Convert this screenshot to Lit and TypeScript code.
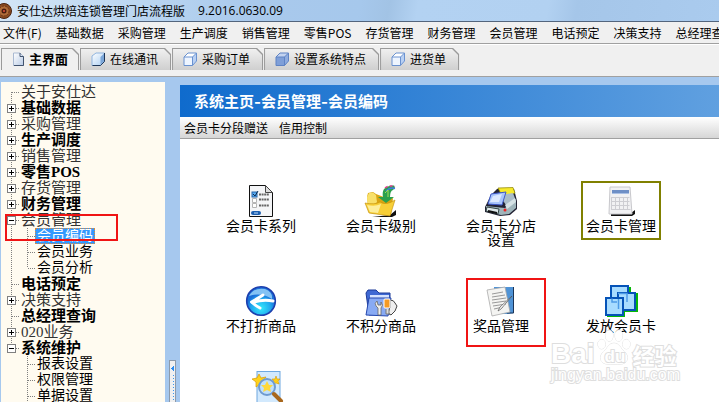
import { LitElement, html, css, svg, nothing } from "lit";
import { customElement, property } from "lit/decorators.js";

const MENUS = ["文件(F)", "基础数据", "采购管理", "生产调度", "销售管理", "零售POS", "存货管理", "财务管理", "会员管理", "电话预定", "决策支持", "总经理查询"];

const TABS = [
  { label: "主界面", icon: "page", active: true },
  { label: "在线通讯", icon: "glass", active: false },
  { label: "采购订单", icon: "cube", active: false },
  { label: "设置系统特点", icon: "solid", active: false },
  { label: "进货单", icon: "cube", active: false },
];

interface Node {
  label: string;
  box?: "plus" | "minus";
  strong?: boolean;
  children?: string[];
}

const TREE: Node[] = [
  { label: "关于安仕达" },
  { label: "基础数据", box: "plus", strong: true },
  { label: "采购管理", box: "plus" },
  { label: "生产调度", box: "plus", strong: true },
  { label: "销售管理", box: "plus" },
  { label: "零售POS", box: "plus", strong: true },
  { label: "存货管理", box: "plus" },
  { label: "财务管理", box: "plus", strong: true },
  { label: "会员管理", box: "minus", children: ["会员编码", "会员业务", "会员分析"] },
  { label: "电话预定", strong: true },
  { label: "决策支持", box: "plus" },
  { label: "总经理查询", strong: true },
  { label: "020业务", box: "plus" },
  { label: "系统维护", box: "minus", strong: true, children: ["报表设置", "权限管理", "单据设置"] },
];

const SELECTED = "会员编码";

const cube = (front: string, top: string, side: string, line: string) => svg`
  <path d="M1 5L5 1H13.5V9L9.5 13.5H1Z" fill=${top}/>
  <path d="M9.5 5L13.5 1V9L9.5 13.5Z" fill=${side}/>
  <path d="M1 5H9.5V13.5H1Z" fill=${front}/>
  <path d="M1 5L5 1H13.5V9L9.5 13.5H1ZM1 5H9.5V13.5M9.5 5L13.5 1" fill="none" stroke=${line} stroke-width="1"/>`;

const TAB_ICONS: Record<string, unknown> = {
  page: svg`<defs><linearGradient id="pg" x2="1" y2="1"><stop stop-color="#fff"/><stop offset="1" stop-color="#b9cbe6"/></linearGradient></defs>
    <path d="M1.5 1H8L11.5 4.5V13.5H1.5Z" fill="url(#pg)" stroke="#a9b9d2"/><path d="M8 1V4.5H11.5V13.5H2" fill="none" stroke="#41536f"/>`,
  glass: svg`<defs><linearGradient id="gl" x2="1" y2="1"><stop stop-color="#fff"/><stop offset="1" stop-color="#a9cdf2"/></linearGradient></defs>
    <path d="M1 4L5 1H13.5V9.500L9.500 13.5H1Z" fill="url(#gl)" stroke="#8fb4df"/><path d="M13.500 1V9.500L9.500 13.500H1.500" fill="none" stroke="#1d3557"/><path d="M9.500 5L13 1.500V9.300L9.500 13Z" fill="#7ba6d8"/>`,
  cube: cube("#eef5ff", "#fff", "#b9d0f3", "#6a92d0"),
  solid: cube("#7f9fd8", "#c3d3f0", "#8facdf", "#5f83c4"),
};

const ICONS: Record<string, unknown> = {
  options: svg`<path d="M12.500 .5H28.500L35.500 7.500V31.500H12.500Z" fill="#f4f5f7" stroke="#111"/>
    <path d="M28.500 .5V7.500H35.500Z" fill="#ddd" stroke="#444"/>
    <rect x="15" y="7" width="5" height="5" fill="#5aaaf0" stroke="#2465a8"/><path d="M16 9L18 11L21 6" fill="none" stroke="#0a2a50"/>
    <path d="M15.500 13.500h4v4h-4zM15.500 18.500h4v4h-4z" fill="#fff" stroke="#b5b5b5"/>
    <path d="M22 9.500h10M22 14.500h10M22 20.500h10" stroke="#666" stroke-width="2" stroke-dasharray="2 .6"/>
    <rect x="14" y="26" width="10" height="4" rx="2" fill="#1d5fae"/><path d="M17 28h4" stroke="#bcd9f7"/>`,
  folder: svg`<path d="M33 30L39 25V30L35 32H15Z" fill="#111"/>
    <path d="M10 12L11 8L16 7L19 9L32 14L36 13L34 30L12 28Z" fill="#d9a512"/>
    <path d="M10 12L12 8L16 7.500L19 10L20 17L11 27Z" fill="#f8e06a"/>
    <path d="M27 4Q31 0 37 .5L38 3L36 5Q33 6 33 12H37L29 18L21 12H26Q25 7 27 4Z" fill="#2ba04b"/>
    <path d="M28 3Q32 0 38 1.500" stroke="#e33c8d" stroke-width="1.500" stroke-dasharray="3 2" fill="none"/><path d="M29 6Q33 2 38 3.500" stroke="#3d7be0" stroke-width="1.500" fill="none"/><path d="M28 8Q30 6 31 5V12" stroke="#a4dc5a" fill="none"/>
    <path d="M8 18Q18 20 23 17Q29 21 38 15L33 31L12 28Z" fill="#f7cf37" stroke="#c08c08" stroke-width=".6"/>
    <path d="M10 20Q18 22 24 19L21 28L13 27Z" fill="#fdee9b"/>`,
  printer: svg`<path d="M8 22L14 10L20 4L24 3L37 4L40 16V24L33 30L23 31L8 27Z" fill="#223"/>
    <path d="M21 3L36 2.500L38 8L26 13Z" fill="#f7ea2c" stroke="#8a8100" stroke-width=".7"/>
    <path d="M22 10L36 8L39 16L29 20Z" fill="#a9bcc8"/>
    <path d="M14 9L29 7L25 20L11 19Z" fill="#a9c5fb" stroke="#3c58c8"/><path d="M16 11L25 9L22 17L13 17Z" fill="#dce9ff"/>
    <path d="M9 21L28 23L39 14V23L32 29L24 30L9 26Z" fill="#9fb5bb"/><path d="M28 20L38 13L39 17L30 24Z" fill="#d5e2e5"/>
    <path d="M10 22L22 24L21 29L9 26Z" fill="#dfe9eb" stroke="#344"/><path d="M11 26L20 28" stroke="#111" stroke-width="2"/>
    <circle cx="28" cy="25" r="1.500" fill="#e22"/>`,
  calc: svg`<path d="M34 28L38 25V29L35 31H14V29Z" fill="#111"/>
    <path d="M13 2H33L35 29H12Z" fill="#f1f1f3" stroke="#c8c8cc"/>
    <rect x="15" y="5" width="17" height="3" fill="#6e8fc6"/><path d="M15 8.500h17" stroke="#aac0e4"/>
    <path d="M14.500 12.500h18M14.500 16.500h18M14.500 20.500h18M14.500 24.500h19M14.500 12v13M18.500 12v13M22.500 12v13M26.500 12v13M30.500 12v13" stroke="#cdcdd2"/>`,
  back: svg`<defs><radialGradient id="bk" cy=".75"><stop stop-color="#35e8fb"/><stop offset=".7" stop-color="#20a6ee"/><stop offset="1" stop-color="#1a6fd8"/></radialGradient></defs>
    <circle cx="24" cy="16" r="14.300" fill="url(#bk)" stroke="#1d3fae" stroke-width="1.600"/>
    <path d="M12 11Q17 2 28 4Q36 7 35 14Q24 7 12 11Z" fill="#9dd7fb" opacity=".8"/>
    <path d="M26 10Q20 14 14.500 17Q19 21 23 23M15 17.500Q26 14 36 16" fill="none" stroke="#fff" stroke-width="3" stroke-linejoin="round" stroke-linecap="round"/>`,
  tools: svg`<path d="M9 8L11 5H19L22 8H33V29L12 30Z" fill="#3f69d3" stroke="#1d3a98"/>
    <path d="M13 10H32V13H13Z" fill="#d4e2ff"/><path d="M9 30L12 13H34L31 31Z" fill="#88aaf4" stroke="#2547ad"/>
    <path d="M20 16Q17 18 19 21L21 23V30H24V23Q27 20 24 17V20H21Z" fill="#eee" stroke="#666" stroke-width=".8"/>
    <path d="M33 15Q37 15 38 18L40 21L38 26L34 30L31 28L33 22Z" fill="#eee" stroke="#444"/><rect x="27" y="14" width="6" height="9" rx="1" fill="#f49a24" stroke="#fff"/><path d="M29 24V29H32V24" fill="#ddd" stroke="#777"/>`,
  prize: svg`<path d="M17 2H37V28L31 29H17Z" fill="#4f93d6"/><path d="M36.500 2V28H30" stroke="#1c3557" stroke-width="1" fill="none"/>
    <path d="M10 5L28 2L33 27L15 31Z" fill="#f4f4f2" stroke="#aaa" stroke-width=".8"/>
    <path d="M15 9L26 7M15 12L28 10M15 15L29 13M15 18L29 16M16 21L29 19M17 24L26 22" stroke="#999"/>
    <path d="M35 11L24 24L21 26L23 22Z" fill="#fff" stroke="#555" stroke-width=".7"/>`,
  copies: svg`<path d="M14 2H33V8H40V27H27V32H9V14H14Z" fill="#08b808" transform="translate(1 0)"/>
    <g fill="#a8dcff" stroke="#0553b8" stroke-width="2"><rect x="14" y="1" width="17" height="17"/><rect x="21" y="8" width="17" height="17"/><rect x="9" y="13" width="17" height="17"/></g>
    <path d="M15 13.500V17H20M21 8.500H30V17M21.500 14V24" fill="none" stroke="#4d9be6" stroke-width="1.500"/>`,
  search: svg`<rect x="20" y=".5" width="23" height="36" fill="#d2e9fd" stroke="#6ea8e0"/>
    <path d="M22 3l2 4 5-1-3 4 2 4-5-1-4 3 0-5-4-3 5-1z" fill="#ffd21c" stroke="#d99a00" stroke-width=".7"/>
    <path d="M39 5l1 3 3 0-2 2 1 3-3-1-3 1 1-3-2-2 3 0z" fill="#ffcf17" stroke="#d99a00" stroke-width=".6"/>
    <circle cx="30" cy="16" r="8" fill="#bfe0fc" stroke="#6f9bd0" stroke-width="2"/>
    <path d="M30 10l2 4 4 0-3 3 1 4-4-2-4 2 1-4-3-3 4 0z" fill="#ffd83a"/>
    <path d="M37 23L44 30" stroke="#a8671c" stroke-width="4" stroke-linecap="round"/>`,
};

const TILES = [
  { label: "会员卡系列", icon: "options" },
  { label: "会员卡级别", icon: "folder" },
  { label: "会员卡分店设置", icon: "printer" },
  { label: "会员卡管理", icon: "calc", selected: true },
  { label: "不打折商品", icon: "back" },
  { label: "不积分商品", icon: "tools" },
  { label: "奖品管理", icon: "prize", marked: true },
  { label: "发放会员卡", icon: "copies" },
  { label: "", icon: "search" },
];

const reset = css`
  * { box-sizing: border-box; }
  button { font: inherit; color: inherit; background: none; border: 0; padding: 0; margin: 0; white-space: nowrap; }
`;

@customElement("nav-tree")
class NavTree extends LitElement {
  static styles = [reset, css`
    :host { display: block; background: #fffbf0; padding: 2px 0 0 4px; overflow: hidden;
      font: 15px/16px "Liberation Serif", "Noto Sans CJK SC", sans-serif; color: #333; }
    ul { list-style: none; margin: 0; padding: 0; }
    .node { position: relative; }
    .row { display: flex; align-items: center; height: 16px; }
    .joint { width: 16px; height: 16px; display: block; flex: none; }
    .label { height: 16px; line-height: 16px; }
    .strong { color: #000; font-weight: 700; }
    .kids { font-size: 14px; color: #000; padding-left: 16px; }
    .trunk { background: repeating-linear-gradient(#808080 0 1px, transparent 1px 2px) 6px 0 / 1px 100% no-repeat; }
    .kid { padding: 0 2px; margin-left: -2px; }
    .on { background: #39f; color: #fff; outline: 1px dotted #d98a3d; outline-offset: -1px; }
    .mark { position: absolute; left: 0; top: 2px; width: 113px; height: 27px; border: 2px solid #f01414; }
  `];

  joint(box?: string, first = false, last = false) {
    return html`<svg class="joint" viewBox="0 0 16 16" shape-rendering="crispEdges" aria-hidden="true">
      <path d=${`M6.5 ${first ? 8 : 0}V${last ? 8 : 16}M7 8.5H14`} stroke="#808080" stroke-dasharray="1 1" fill="none"/>
      ${box ? svg`<rect x="2.5" y="4.5" width="8" height="8" fill="#fff" stroke="#808080"/><path d=${box === "plus" ? "M4 8.5H9M6.5 6V11" : "M4 8.5H9"} stroke="#000"/>` : nothing}
    </svg>`;
  }

  render() {
    const end = TREE.length - 1;
    return html`<ul>${TREE.map((n, i) => html`
      <li class="node">
        <div class="row">${this.joint(n.box, i === 0, i === end)}<button class="label ${n.strong ? "strong" : ""}">${n.label}</button></div>
        ${n.children ? html`<ul class="kids ${i === end ? "" : "trunk"}">${n.children.map((c, k) => html`
          <li class="row">${this.joint(undefined, false, i !== end && k === n.children!.length - 1)}<button class="label kid ${c === SELECTED ? "on" : ""}">${c}</button></li>`)}</ul>` : nothing}
        ${n.children?.includes(SELECTED) ? html`<span class="mark"></span>` : nothing}
      </li>`)}</ul>`;
  }
}

@customElement("tool-tile")
class ToolTile extends LitElement {
  @property() label = "";
  @property() icon = "";
  @property({ type: Boolean }) selected = false;
  @property({ type: Boolean }) marked = false;

  static styles = [reset, css`
    :host { display: block; position: relative; }
    .tile { display: flex; flex-direction: column; align-items: center; gap: 1px; width: 100%; border: 2px solid transparent;
      padding: 2px 0 6px; font: 14px/14px "Noto Sans CJK SC", sans-serif; color: #000; white-space: normal; }
    .selected { border-color: #808000; }
    .icon { width: 48px; height: 32px; display: block; }
    .shifted { margin-left: 14px; }
    .label { min-height: 14px; width: 72px; text-align: center; }
    .mark { position: absolute; left: 5px; top: -3px; width: 80px; height: 69px; border: 2px solid #f01414; }
  `];

  render() {
    return html`<button class="tile ${this.selected ? "selected" : ""}" aria-label=${this.label || "查询"}>
        <svg class="icon" viewBox="0 0 48 32">${ICONS[this.icon]}</svg>
        <span class="label">${this.label}</span>
      </button>${this.marked ? html`<span class="mark"></span>` : nothing}`;
  }
}

@customElement("app-root")
class AppRoot extends LitElement {
  static styles = [reset, css`
    :host { display: flex; flex-direction: column; height: 100vh; overflow: hidden; background: #f0f0f0;
      font: 12px/16px "Noto Sans CJK SC", sans-serif; color: #000; }
    .title { display: flex; align-items: center; gap: 5px; height: 22px; flex: none; border-bottom: 1px solid #53657d;
      background: linear-gradient(100deg, #d3e5f6 0, #bfd9f2 16%, #a9c9ec 35%, #a6c8ec 50%, #a2c3e5 54%, #b3d2f2 58%, #b2d1f1 76%, #a5c6e9 80%, #aacbee 100%); }
    .logo { width: 12px; height: 16px; display: block; }
    .name { font: inherit; margin: 0; white-space: nowrap; }
    .version { font-family: "Open Sans", sans-serif; margin-left: 8px; }
    .menu { display: flex; gap: 14px; height: 22px; flex: none; padding: 0 3px; align-items: center; border-bottom: 1px solid #a0a0a0; overflow: hidden; }
    .tabs { display: flex; height: 33px; flex: none; padding: 3px 0 0 1px; border-top: 1px solid #fff; border-bottom: 1px solid #a0a0a0; }
    .tab { position: relative; display: flex; align-items: center; gap: 5px; height: 22px; padding: 0 14px 0 11px; background: #9a9a9a;
      clip-path: polygon(0 0, calc(100% - 7px) 0, calc(100% - 1px) 6px, calc(100% - 1px) 100%, 0 100%); }
    .tab::before { content: ""; position: absolute; inset: 1px 2px 0 1px; background: linear-gradient(#f0f0f0, #cfcfcf);
      clip-path: polygon(0 0, calc(100% - 6px) 0, 100% 6px, 100% 100%, 0 100%); }
    .tab.active { font-size: 13px; font-weight: 700; padding-right: 12px; }
    .tab.active::before { background: #f0f0f0; }
    .tab > * { position: relative; }
    .glyph { width: 14px; height: 14px; display: block; }
    .active .glyph { width: 12px; }
    .work { display: grid; grid-template-columns: 164px 15px minmax(0, 1fr); flex: 1; min-height: 0; background: #a6c8ee; padding-left: 1px; }
    .tree { margin-top: 5px; }
    .split { padding-top: 283px; display: flex; justify-content: center; }
    .grip { width: 7px; border: 1px solid #8c9aab; border-bottom: 0; background: #f0f0f0; }
    .arrow { display: block; width: 5px; height: 60px; }
    .panel { margin-top: 8px; background: #fff; position: relative; }
    .heading { margin: 0; height: 32px; padding: 2px 14px 0; line-height: 30px; font-size: 15px; font-weight: 700; color: #fff;
      font-family: "Inter", "Noto Sans CJK SC", sans-serif; background: linear-gradient(90deg, #0f6bcd, #60a0e0); white-space: nowrap; }
    .links { display: flex; gap: 11px; height: 22px; padding: 0 4px; align-items: center; background: linear-gradient(#fff, #d6d6d6); border-bottom: 1px solid #a0a0a0; }
    .tiles { display: grid; grid-template-columns: repeat(auto-fill, 80px); gap: 27px 40px; padding: 42px 0 0 41px; align-items: start; }
    .stamp { position: absolute; left: 371px; top: 243px; width: 130px; color: #fff; -webkit-text-stroke: 2px #dedede; paint-order: stroke fill;
      font-family: "Liberation Sans", "Noto Sans CJK SC", sans-serif; font-weight: 700; pointer-events: none; }
    .brand { display: flex; align-items: flex-end; height: 38px; font-size: 28px; line-height: 24px; white-space: nowrap; }
    .paw { width: 38px; height: 38px; display: block; flex: none; }
    .du { fill: #fff; stroke: #dedede; stroke-width: 2px; paint-order: stroke; font-size: 18px; }
    .cn { font-size: 22px; font-family: "Noto Sans CJK SC", sans-serif; }
    .site { font-size: 16px; line-height: 18px; font-weight: 400; }
  `];

  render() {
    return html`
      <header class="title">
        <svg class="logo" viewBox="0 0 12 16"><circle cx="4" cy="8" r="7.5" fill="#8a4a20" stroke="#4a2410"/><circle cx="4" cy="8" r="5" fill="#b06c38" stroke="#6a3517" stroke-dasharray="2 1"/><circle cx="4" cy="8" r="2.500" fill="#4a1c10"/><circle cx="4" cy="8" r="1" fill="#e0503a"/></svg>
        <h1 class="name">安仕达烘焙连锁管理门店流程版</h1><span class="version">9.2016.0630.09</span>
      </header>
      <nav class="menu">${MENUS.map((m) => html`<button>${m}</button>`)}</nav>
      <nav class="tabs">${TABS.map((t) => html`
        <button class="tab ${t.active ? "active" : ""}"><svg class="glyph" viewBox=${t.active ? "0 0 12 14" : "0 0 14 14"}>${TAB_ICONS[t.icon]}</svg><span>${t.label}</span></button>`)}</nav>
      <main class="work">
        <nav-tree class="tree"></nav-tree>
        <div class="split"><div class="grip"><svg class="arrow" viewBox="0 0 5 60" shape-rendering="crispEdges"><path d="M4 4V11L1 7.500Z" fill="#2a8cf0"/><path d="M3.500 14V60" stroke="#3a96f0" stroke-dasharray="1 2"/></svg></div></div>
        <section class="panel">
          <h2 class="heading">系统主页-会员管理-会员编码</h2>
          <div class="links"><button>会员卡分段赠送</button><button>信用控制</button></div>
          <div class="tiles">${TILES.map((t) => html`<tool-tile .label=${t.label} .icon=${t.icon} .selected=${!!t.selected} .marked=${!!t.marked}></tool-tile>`)}</div>
          <div class="stamp">
            <div class="brand"><span>Bai</span><svg class="paw" viewBox="0 0 36 40"><g fill="#fff" stroke="#dedede"><ellipse cx="5" cy="17" rx="4" ry="5"/><ellipse cx="13" cy="8" rx="4" ry="6"/><ellipse cx="23" cy="8" rx="4" ry="6"/><ellipse cx="31" cy="17" rx="4" ry="5"/><path d="M18 16C12 16 11 22 7 25C1 30 4 38 11 38C15 38 21 38 25 38C32 38 35 30 29 25C25 22 24 16 18 16Z"/></g><text class="du" x="8" y="36">du</text></svg><span class="cn">经验</span></div>
            <div class="site">jingyan.baidu.com</div>
          </div>
        </section>
      </main>`;
  }
}
